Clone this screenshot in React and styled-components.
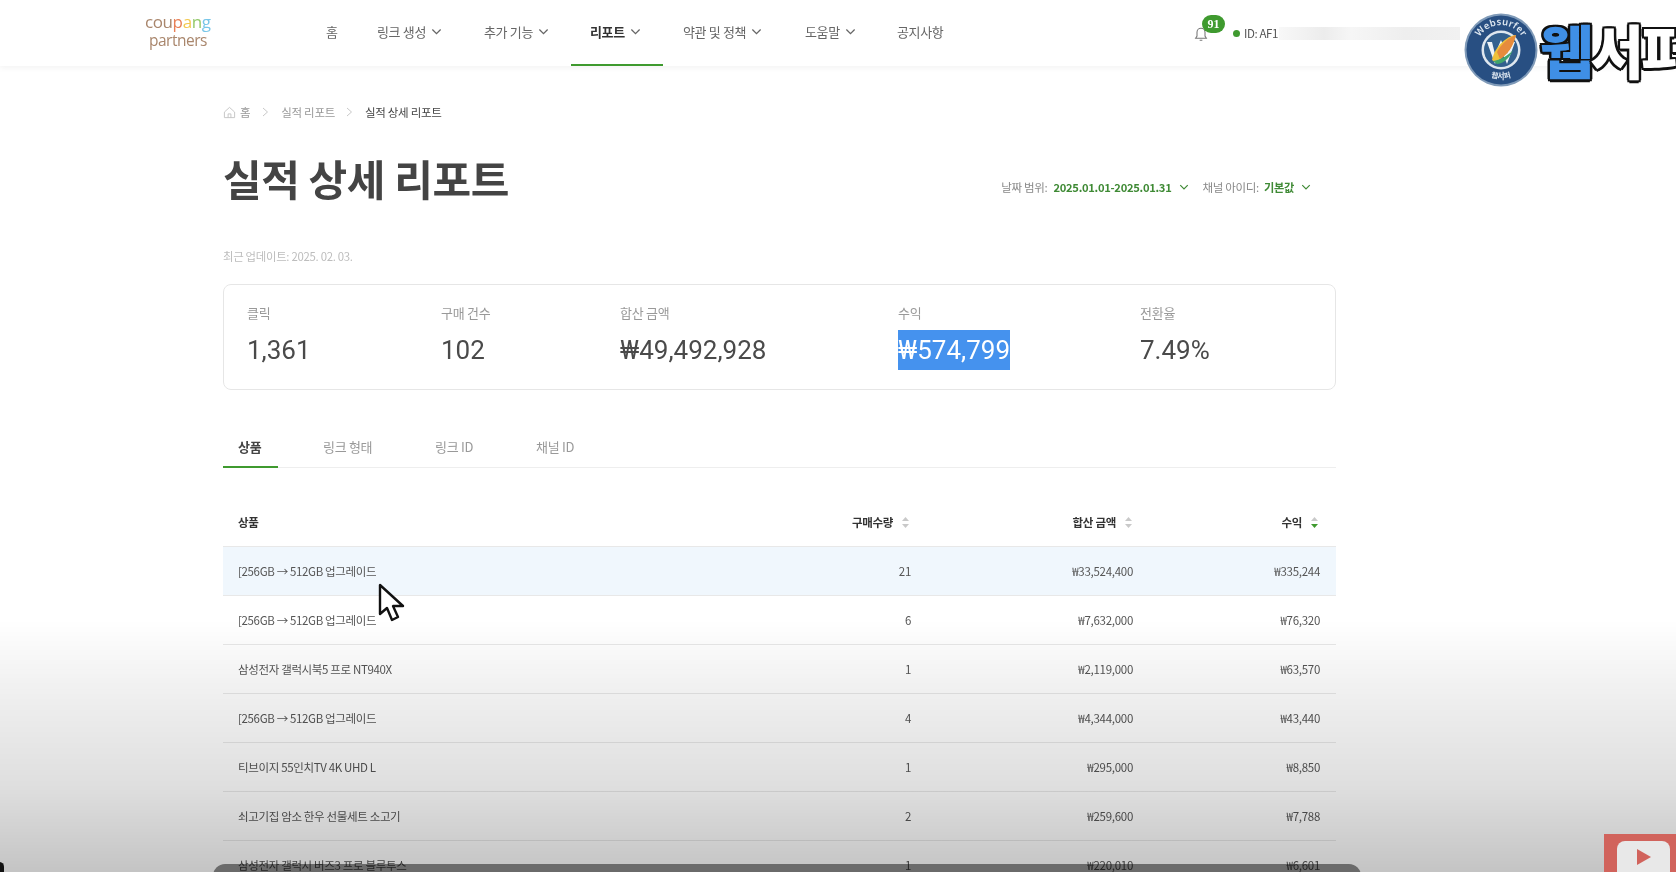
import React from "react";
import styled, { createGlobalStyle } from "styled-components";

const KR = `"Noto Sans CJK KR", "Noto Sans", sans-serif`;

const Global = createGlobalStyle`
  html, body {
    margin: 0;
    height: 872px;
    overflow: hidden;
    background: #fff;
    font-family: ${KR};
  }
  * { box-sizing: border-box; }
`;

const Page = styled.div`
  position: relative;
  width: 1676px;
  height: 872px;
  overflow: hidden;
  filter: blur(0.4px);
`;

const Header = styled.header`
  height: 66px;
  display: flex;
  align-items: stretch;
  padding-left: 145px;
  box-shadow: 0 2px 6px rgba(0, 0, 0, 0.05);
`;

const Logo = styled.div`
  width: 181px;
  padding-bottom: 5px;
  display: flex;
  flex-direction: column;
  justify-content: center;
  align-items: flex-start;
  font-family: "Open Sans", sans-serif;
  font-size: 17px;
  font-weight: 500;
  line-height: 18px;
  letter-spacing: -0.4px;
  color: #a9866c;
`;

const LogoLine = styled.div`
  padding-left: ${props => props.$indent || 0}px;
  font-size: ${props => props.$size || 17}px;
  letter-spacing: ${props => props.$spacing || -0.4}px;
`;

const Letter = styled.span`
  display: inline-block;
  color: ${props => props.$color};
`;

const Nav = styled.nav`
  display: flex;
  align-items: stretch;
`;

const NavItem = styled.a`
  width: ${props => props.$width}px;
  padding-left: ${props => props.$pad}px;
  padding-bottom: 2px;
  display: flex;
  align-items: center;
  gap: 5px;
  font-size: 13px;
  letter-spacing: -0.35px;
  font-weight: ${props => (props.$active ? 700 : 400)};
  color: ${props => (props.$active ? "#333" : "#666")};
  border-bottom: 2px solid ${props => (props.$active ? "#3f9a2f" : "transparent")};
`;

const Chevron = styled.svg`
  width: ${props => props.$size || 11}px;
  height: ${props => props.$size || 11}px;
  fill: none;
  stroke: ${props => props.$color || "#666"};
  stroke-width: 1.4;
  flex: none;
`;

const UserArea = styled.div`
  margin-left: auto;
  width: 483px;
  display: flex;
  align-items: center;
`;

const Bell = styled.div`
  position: relative;
  width: 40px;
  height: 18px;
  margin-top: -5px;
  padding-top: 1px;
`;

const Badge = styled.span`
  position: absolute;
  left: 9px;
  top: -7px;
  width: 23px;
  height: 18px;
  border-radius: 9px;
  background: #3f9a2f;
  color: #fff;
  font-family: "Liberation Serif", serif;
  font-size: 12px;
  font-weight: 700;
  line-height: 18px;
  text-align: center;
`;

const StatusDot = styled.span`
  width: 7px;
  height: 7px;
  border-radius: 50%;
  background: #3f9a2f;
  margin-right: 4px;
`;

const UserId = styled.span`
  font-size: 11.5px;
  letter-spacing: -0.4px;
  color: #555;
  width: 35px;
`;

const BlurBar = styled.span`
  width: 181px;
  height: 13px;
  background: linear-gradient(90deg, #f8f8f8, #ececec 25%, #f6f6f6 40%, #eeeeee 70%, #f1f1f1);
`;

const Main = styled.main`
  width: 1113px;
  margin-left: 223px;
`;

const Crumbs = styled.div`
  height: 20px;
  margin-top: 36px;
  display: flex;
  align-items: center;
  font-size: 11.5px;
  letter-spacing: -0.3px;
  color: #999;
`;

const Crumb = styled.span`
  color: ${props => (props.$current ? "#444" : "#999")};
  margin-left: ${props => props.$left || 0}px;
  margin-right: ${props => props.$right || 0}px;
`;

const HomeIcon = styled.svg`
  width: 13px;
  height: 13px;
  fill: none;
  stroke: #c4c4c4;
  margin-right: 4px;
`;

const TitleRow = styled.div`
  display: flex;
  align-items: flex-start;
  justify-content: space-between;
  margin-top: 26px;
`;

const Title = styled.h1`
  margin: 0;
  font-size: 42px;
  line-height: 60px;
  font-weight: 700;
  letter-spacing: -0.4px;
  color: #444;
`;

const Filters = styled.div`
  display: flex;
  align-items: center;
  margin: 31px 25px 0 0;
  font-size: 11.5px;
  letter-spacing: -0.3px;
  color: #888;
`;

const FilterValue = styled.strong`
  font-size: 11.2px;
  font-weight: 700;
  color: #3f8a35;
  margin-left: ${props => props.$left}px;
  margin-right: ${props => props.$right}px;
`;

const FilterGap = styled.span`
  width: ${props => props.$w}px;
`;

const Updated = styled.div`
  margin-top: 40px;
  font-size: 11.4px;
  line-height: 16px;
  letter-spacing: -0.3px;
  color: #bdbdbd;
`;

const SummaryCard = styled.section`
  margin-top: 20px;
  height: 106px;
  border: 1px solid #e6e6e6;
  border-radius: 8px;
  padding: 19px 0 0 23px;
  display: grid;
  grid-template-columns: 194px 179px 278px 242px 1fr;
`;

const Stat = styled.div`
  display: flex;
  flex-direction: column;
  align-items: flex-start;
`;

const StatLabel = styled.span`
  font-size: 13px;
  line-height: 18px;
  letter-spacing: -0.25px;
  color: #999;
`;

const StatValue = styled.span`
  margin-top: 8px;
  font-family: Roboto, sans-serif;
  font-size: 26px;
  line-height: 40px;
  color: ${props => (props.$selected ? "#fff" : "#4a4a4a")};
  background: ${props => (props.$selected ? "#4592ee" : "transparent")};
`;

const Tabs = styled.div`
  margin-top: 41px;
  height: 37px;
  display: flex;
  border-bottom: 1px solid #eee;
`;

const Tab = styled.div`
  width: ${props => props.$width}px;
  padding-left: ${props => props.$pad}px;
  height: 37px;
  font-size: 13px;
  line-height: 32px;
  letter-spacing: -0.3px;
  font-weight: ${props => (props.$active ? 700 : 400)};
  color: ${props => (props.$active ? "#444" : "#999")};
  border-bottom: 2px solid ${props => (props.$active ? "#3f9a2f" : "transparent")};
`;

const COLUMNS = "1fr 140px 222px 187px";

const HeadRow = styled.div`
  margin-top: 30px;
  height: 49px;
  display: grid;
  grid-template-columns: ${COLUMNS};
  align-items: center;
  padding: 0 16px 0 15px;
  border-bottom: 1px solid #e8e8e8;
  font-size: 11.5px;
  font-weight: 700;
  letter-spacing: -0.3px;
  color: #333;
`;

const HeadCell = styled.div`
  display: flex;
  align-items: center;
  justify-content: ${props => (props.$right ? "flex-end" : "flex-start")};
  gap: 8px;
  padding-right: ${props => props.$pad || 0}px;
`;

const SortIcon = styled.svg`
  width: 9px;
  height: 13px;
`;

const Row = styled.div`
  height: 49px;
  display: grid;
  grid-template-columns: ${COLUMNS};
  align-items: center;
  padding: 0 16px 0 15px;
  border-bottom: 1px solid #e8e8e8;
  background: ${props => (props.$hover ? "#f0f7fd" : "transparent")};
  font-size: 11.5px;
  letter-spacing: -0.35px;
  color: #555;
`;

const NumCell = styled.div`
  text-align: right;
  letter-spacing: -0.28px;
`;

const Shade = styled.div`
  position: absolute;
  left: 0;
  right: 0;
  top: 620px;
  bottom: 0;
  background: linear-gradient(180deg, rgba(0, 0, 0, 0), rgba(0, 0, 0, 0.05) 24%, rgba(0, 0, 0, 0.13) 67%, rgba(0, 0, 0, 0.23));
  pointer-events: none;
`;

const Cursor = styled.svg`
  position: absolute;
  left: 378px;
  top: 583px;
  width: 28px;
  height: 40px;
`;

const ProgressPanel = styled.div`
  position: absolute;
  left: 213px;
  top: 864px;
  width: 1148px;
  height: 12px;
  border-radius: 12px 12px 0 0;
  background: #8a8a8a;
  mix-blend-mode: multiply;
`;

const CornerBlob = styled.div`
  position: absolute;
  left: -5px;
  top: 862px;
  width: 9px;
  height: 14px;
  border-radius: 5px;
  background: #111;
`;

const Subscribe = styled.div`
  position: absolute;
  left: 1604px;
  top: 834px;
  width: 72px;
  height: 38px;
  background: #d1635c;
  padding: 7px 0 0 13px;
`;

const PlayBox = styled.div`
  width: 53px;
  height: 40px;
  border-radius: 8px;
  background: #e8e8e8;
  display: flex;
  align-items: center;
  justify-content: center;
`;

const PlayTriangle = styled.span`
  width: 0;
  height: 0;
  margin-top: -8px;
  border-left: 14px solid #d1635c;
  border-top: 8px solid transparent;
  border-bottom: 8px solid transparent;
`;

const BadgeSvg = styled.svg`
  position: absolute;
  left: 1464px;
  top: 13px;
  width: 74px;
  height: 74px;
`;

const Watermark = styled.div`
  position: absolute;
  left: 1540px;
  top: 7px;
  white-space: nowrap;
  font-size: 58px;
  line-height: 84px;
  font-weight: 900;
  letter-spacing: -3px;
  text-shadow: -2.5px 0 #111, 2.5px 0 #111, 0 -2.5px #111, 0 2.5px #111, -2px -2px #111,
    2px -2px #111, -2px 2px #111, 2px 2px #111;
`;

const WatermarkChar = styled.span`
  color: ${props => props.$color};
`;

const navItems = [
  { label: "홈", width: 51, pad: 0 },
  { label: "링크 생성", width: 107, pad: 0, caret: true },
  { label: "추가 기능", width: 87, pad: 0, caret: true },
  { label: "리포트", width: 92, pad: 19, caret: true, active: true },
  { label: "약관 및 정책", width: 122, pad: 20, caret: true },
  { label: "도움말", width: 112, pad: 20, caret: true },
  { label: "공지사항", width: 80, pad: 0 }
];

const stats = [
  { label: "클릭", value: "1,361" },
  { label: "구매 건수", value: "102" },
  { label: "합산 금액", value: "₩49,492,928" },
  { label: "수익", value: "₩574,799", selected: true },
  { label: "전환율", value: "7.49%" }
];

const tabs = [
  { label: "상품", width: 55, pad: 15, active: true },
  { label: "링크 형태", width: 112, pad: 45 },
  { label: "링크 ID", width: 101, pad: 45 },
  { label: "채널 ID", width: 100, pad: 45 }
];

const rows = [
  ["[256GB → 512GB 업그레이드", "21", "₩33,524,400", "₩335,244"],
  ["[256GB → 512GB 업그레이드", "6", "₩7,632,000", "₩76,320"],
  ["삼성전자 갤럭시북5 프로 NT940X", "1", "₩2,119,000", "₩63,570"],
  ["[256GB → 512GB 업그레이드", "4", "₩4,344,000", "₩43,440"],
  ["티브이지 55인치TV 4K UHD L", "1", "₩295,000", "₩8,850"],
  ["쇠고기집 암소 한우 선물세트 소고기", "2", "₩259,600", "₩7,788"],
  ["삼성전자 갤럭시 버즈3 프로 블루투스", "1", "₩220,010", "₩6,601"]
];

const Caret = ({ size, color }) => (
  <Chevron viewBox="0 0 12 12" $size={size} $color={color}>
    <path d="M1.5 3.8 6 8.3l4.5-4.5" />
  </Chevron>
);

const Sort = ({ active }) => (
  <SortIcon viewBox="0 0 9 13">
    <path d="M4.5 1 8 5H1z" fill="#c9c9c9" />
    <path d="M4.5 12 8 8H1z" fill={active ? "#3f9a2f" : "#c9c9c9"} />
  </SortIcon>
);

const Arrow = () => (
  <svg width="7" height="10" viewBox="0 0 7 10" fill="none" stroke="#c8c8c8">
    <path d="M1 1l4.5 4L1 9" />
  </svg>
);

const SiteBadge = () => (
  <BadgeSvg viewBox="0 0 74 74">
    <defs>
      <path id="arcTop" d="M12.5 42A25 25 0 1 1 61.5 42" />
      <path id="arcBottom" d="M14.3 55A29 29 0 0 0 59.7 55" />
    </defs>
    <circle cx="37" cy="37" r="36.5" fill="#7f9ab8" />
    <circle cx="37" cy="37" r="34.5" fill="#284f82" />
    <circle cx="37" cy="37" r="19.5" fill="#dfe7ef" />
    <circle cx="37" cy="37" r="17" fill="#33608f" />
    <path d="M23 29l8 22 6-15 6 15 8-22h-5l-3 12-6-14-6 14-3-12z" fill="#eef3f8" />
    <path d="M52 22C43 23 31 33 28 47l3 2c8-3 17-12 21-27z" fill="#f0c23a" />
    <path d="M52 22c-8 3-15 9-19 17l3 7c8-5 13-12 16-24z" fill="#e68b3c" />
    <path d="M29 48c7-1 15-5 20-11-3 7-8 13-16 14z" fill="#41a56d" />
    <text fontFamily="Noto Sans, sans-serif" fontSize="9.5" fontWeight="600" fill="#dce6f0" letterSpacing="0.3">
      <textPath href="#arcTop" startOffset="50%" textAnchor="middle">Websurfer</textPath>
    </text>
    <text fontFamily="Noto Sans CJK KR, sans-serif" fontSize="7.5" fontWeight="700" fill="#dce6f0">
      <textPath href="#arcBottom" startOffset="50%" textAnchor="middle">웹서퍼</textPath>
    </text>
  </BadgeSvg>
);

const App = () => (
  <Page>
    <Global />
    <Header>
      <Logo>
        <LogoLine>
          cou<Letter $color="#e87f55">p</Letter>
          <Letter $color="#f3c94f">a</Letter>
          <Letter $color="#93c96a">n</Letter>
          <Letter $color="#78c6e8">g</Letter>
        </LogoLine>
        <LogoLine $indent={4} $size={15.5} $spacing={-0.5}>partners</LogoLine>
      </Logo>
      <Nav>
        {navItems.map(item => (
          <NavItem key={item.label} $width={item.width} $pad={item.pad} $active={item.active}>
            {item.label}
            {item.caret && <Caret />}
          </NavItem>
        ))}
      </Nav>
      <UserArea>
        <Bell>
          <svg width="16" height="17" viewBox="0 0 24 24" fill="none" stroke="#777" strokeWidth="1.6">
            <path d="M6 16V10a6 6 0 0 1 12 0v6l2 3H4zM10 22h4" />
          </svg>
          <Badge>91</Badge>
        </Bell>
        <StatusDot />
        <UserId>ID: AF1</UserId>
        <BlurBar />
      </UserArea>
    </Header>

    <Main>
      <Crumbs>
        <HomeIcon viewBox="0 0 14 14">
          <path d="M1.5 6.5 7 1.5l5.5 5v6h-11zM5.5 12.5v-4h3v4" />
        </HomeIcon>
        <Crumb $right={12}>홈</Crumb>
        <Arrow />
        <Crumb $left={12} $right={11}>실적 리포트</Crumb>
        <Arrow />
        <Crumb $current $left={12}>실적 상세 리포트</Crumb>
      </Crumbs>

      <TitleRow>
        <Title>실적 상세 리포트</Title>
        <Filters>
          날짜 범위:
          <FilterValue $left={6} $right={8}>2025.01.01-2025.01.31</FilterValue>
          <Caret color="#3f8a35" size={10} />
          <FilterGap $w={13} />
          채널 아이디:
          <FilterValue $left={5} $right={7}>기본값</FilterValue>
          <Caret color="#3f8a35" size={10} />
        </Filters>
      </TitleRow>

      <Updated>최근 업데이트: 2025. 02. 03.</Updated>

      <SummaryCard>
        {stats.map(stat => (
          <Stat key={stat.label}>
            <StatLabel>{stat.label}</StatLabel>
            <StatValue $selected={stat.selected}>{stat.value}</StatValue>
          </Stat>
        ))}
      </SummaryCard>

      <Tabs>
        {tabs.map(tab => (
          <Tab key={tab.label} $width={tab.width} $pad={tab.pad} $active={tab.active}>
            {tab.label}
          </Tab>
        ))}
      </Tabs>

      <HeadRow>
        <HeadCell>상품</HeadCell>
        <HeadCell $right $pad={1}>
          구매수량 <Sort />
        </HeadCell>
        <HeadCell $right>
          합산 금액 <Sort />
        </HeadCell>
        <HeadCell $right $pad={1}>
          수익 <Sort active />
        </HeadCell>
      </HeadRow>

      {rows.map(([name, qty, total, profit], i) => (
        <Row key={i} $hover={i === 0}>
          <div>{name}</div>
          <NumCell>{qty}</NumCell>
          <NumCell>{total}</NumCell>
          <NumCell>{profit}</NumCell>
        </Row>
      ))}
    </Main>

    <Shade />
    <Cursor viewBox="0 0 28 40">
      <path
        d="M2 2v29l7-6 5 12 6-3-5-11h10z"
        fill="#fff"
        stroke="#111"
        strokeWidth="2.4"
        strokeLinejoin="round"
      />
    </Cursor>
    <ProgressPanel />
    <CornerBlob />
    <Subscribe>
      <PlayBox>
        <PlayTriangle />
      </PlayBox>
    </Subscribe>
    <SiteBadge />
    <Watermark>
      <WatermarkChar $color="#3f8fe6">웹</WatermarkChar>
      <WatermarkChar $color="#fff">서</WatermarkChar>
      <WatermarkChar $color="#fff">퍼</WatermarkChar>
    </Watermark>
  </Page>
);

export default App;
